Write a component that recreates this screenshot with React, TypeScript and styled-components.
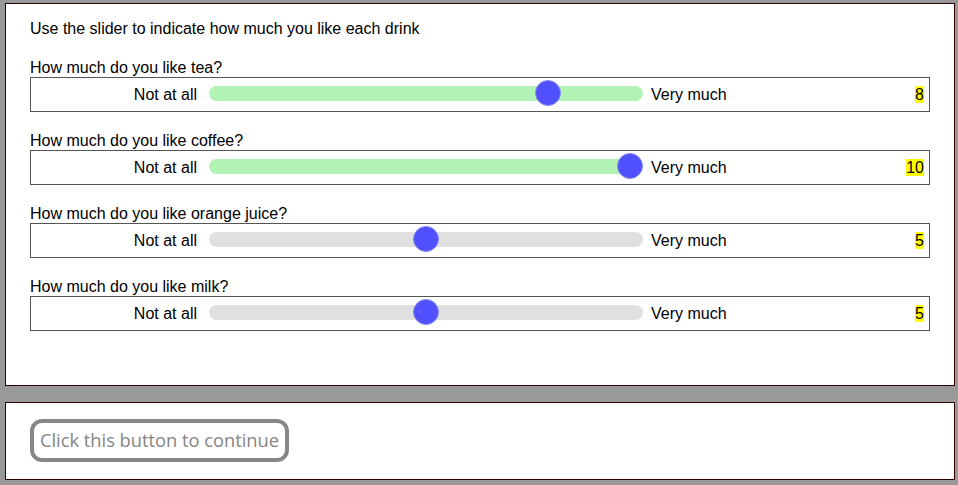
import React from "react";
import styled, { createGlobalStyle } from "styled-components";

const Global = createGlobalStyle`
  html, body { margin: 0; padding: 0; background: #999999; }
  body { font-family: "Liberation Sans", Arial, sans-serif; font-size: 16px; color: #000; }
`;

const Page = styled.div`
  padding: 3px 3px 0 5px;
  display: flex;
  flex-direction: column;
  gap: 16px;
`;

const Panel = styled.div<{ $h: number }>`
  box-sizing: border-box;
  width: 950px;
  height: ${(p) => p.$h}px;
  background: #ffffff;
  border: 1px solid #330000;
  padding: 16px 24px;
  display: flex;
  flex-direction: column;
`;

const Intro = styled.div`
  line-height: 18px;
  margin-bottom: 20px;
`;

const Questions = styled.div`
  display: flex;
  flex-direction: column;
  gap: 19px;
`;

const Question = styled.div`
  display: flex;
  flex-direction: column;
`;

const QLabel = styled.div`
  line-height: 19px;
`;

const Row = styled.div`
  box-sizing: border-box;
  height: 35px;
  border: 1px solid #555555;
  display: flex;
  align-items: center;
  line-height: 18px;
`;

const LeftLabel = styled.div`
  width: 166px;
  text-align: right;
  margin-right: 12px;
`;

const Track = styled.div<{ $active: boolean }>`
  position: relative;
  width: 434px;
  height: 15px;
  border-radius: 8px;
  background: ${(p) => (p.$active ? "#b2f3b5" : "#e0e0e0")};
  margin-top: -3px;
  margin-right: 8px;
`;

const Thumb = styled.div`
  position: absolute;
  top: -6px;
  width: 26px;
  height: 26px;
  box-sizing: border-box;
  border-radius: 50%;
  background: #5050ff;
  border: 1px solid #8a8ae8;
  transform: translateX(-50%);
`;

const RightLabel = styled.div``;

const Value = styled.div`
  flex: 1;
  text-align: right;
  padding-right: 5px;
`;

const Mark = styled.span`
  background: #ffff00;
`;

const ContinueButton = styled.button`
  align-self: flex-start;
  box-sizing: border-box;
  width: 259px;
  height: 43px;
  border: 4px solid #878787;
  border-radius: 12px;
  background: #ffffff;
  color: #858585;
  font-family: "Open Sans", "Noto Sans", sans-serif;
  font-size: 18.3px;
  padding: 0 0 2px 0;
  white-space: nowrap;
`;

const questions = [
  { q: "How much do you like tea?", v: 8, active: true },
  { q: "How much do you like coffee?", v: 10, active: true },
  { q: "How much do you like orange juice?", v: 5, active: false },
  { q: "How much do you like milk?", v: 5, active: false },
];

export default function App() {
  return (
    <>
      <Global />
      <Page>
        <Panel $h={383}>
          <Intro>Use the slider to indicate how much you like each drink</Intro>
          <Questions>
            {questions.map((item) => (
              <Question key={item.q}>
                <QLabel>{item.q}</QLabel>
                <Row>
                  <LeftLabel>Not at all</LeftLabel>
                  <Track $active={item.active}>
                    <Thumb style={{ left: 13 + (item.v / 10) * 408 - 0.5 }} />
                  </Track>
                  <RightLabel>Very much</RightLabel>
                  <Value>
                    <Mark>{item.v}</Mark>
                  </Value>
                </Row>
              </Question>
            ))}
          </Questions>
        </Panel>
        <Panel $h={78}>
          <ContinueButton>Click this button to continue</ContinueButton>
        </Panel>
      </Page>
    </>
  );
}
